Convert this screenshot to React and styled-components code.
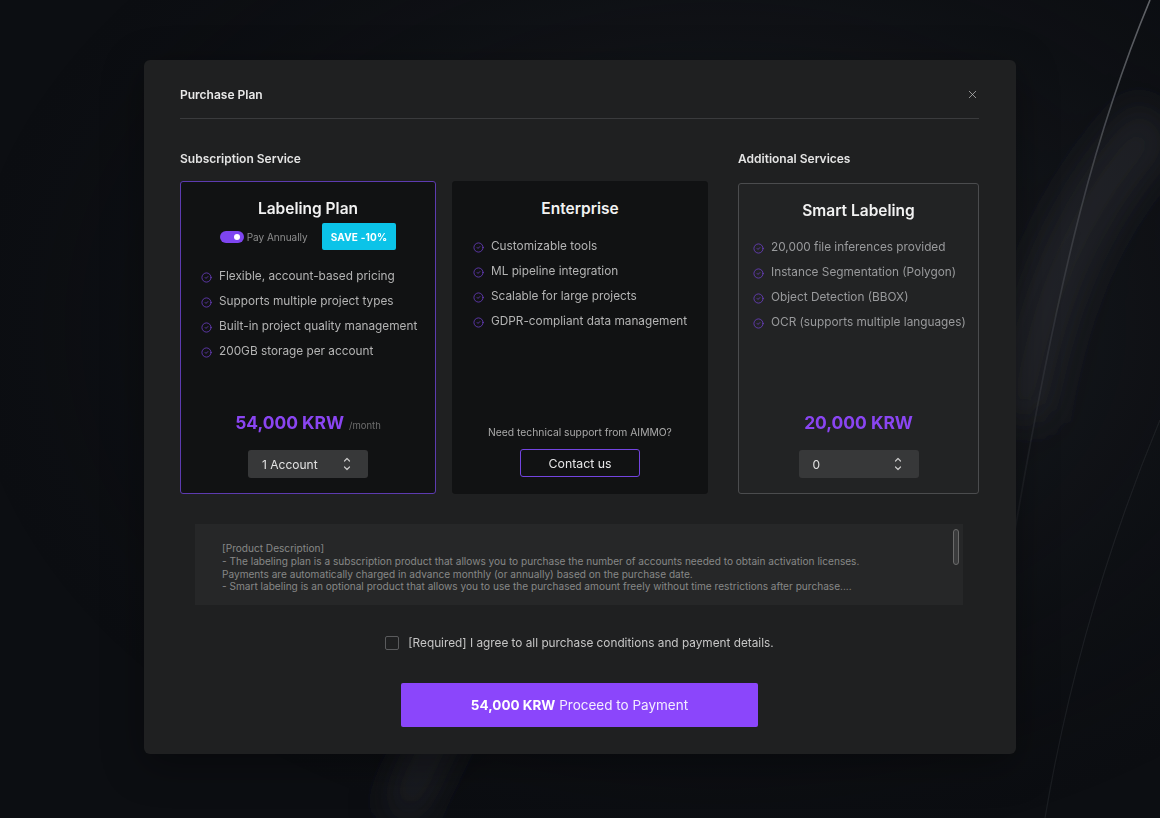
import React, { useState } from "react";
import styled, { createGlobalStyle } from "styled-components";
import { CircleCheck, X } from "lucide-react";

const GlobalStyle = createGlobalStyle`
  * { box-sizing: border-box; }
  html, body {
    margin: 0;
    padding: 0;
    background: #0c0e12;
    font-family: Inter, "Noto Sans", sans-serif;
    -webkit-font-smoothing: antialiased;
  }
`;

const labelingFeatures = [
  "Flexible, account-based pricing",
  "Supports multiple project types",
  "Built-in project quality management",
  "200GB storage per account",
];

const enterpriseFeatures = [
  "Customizable tools",
  "ML pipeline integration",
  "Scalable for large projects",
  "GDPR-compliant data management",
];

const smartFeatures = [
  "20,000 file inferences provided",
  "Instance Segmentation (Polygon)",
  "Object Detection (BBOX)",
  "OCR (supports multiple languages)",
];

function Backdrop() {
  return (
    <BackdropSvg viewBox="0 0 1160 818" preserveAspectRatio="none">
      <defs>
        <radialGradient id="haze" cx="0.62" cy="0.4" r="0.65">
          <stop offset="0" stopColor="#30343a" stopOpacity="0.55" />
          <stop offset="1" stopColor="#0c0e12" stopOpacity="0" />
        </radialGradient>
        <linearGradient id="streak" x1="0" y1="0" x2="0" y2="1">
          <stop offset="0" stopColor="#c9ccd2" stopOpacity="0.45" />
          <stop offset="0.6" stopColor="#8a8f98" stopOpacity="0.2" />
          <stop offset="1" stopColor="#8a8f98" stopOpacity="0.05" />
        </linearGradient>
        <filter id="soft" x="-50%" y="-50%" width="200%" height="200%">
          <feGaussianBlur stdDeviation="18" />
        </filter>
      </defs>
      <rect width="1160" height="818" fill="url(#haze)" />
      <path d="M1150 0 C 1100 120, 1060 260, 1010 560" stroke="url(#streak)" strokeWidth="1.6" fill="none" />
      <path d="M1160 420 C 1110 540, 1070 670, 1045 818" stroke="#5d626b" strokeOpacity="0.18" strokeWidth="1.2" fill="none" />
      <path d="M400 818 C 440 720, 490 640, 540 560" stroke="#3a3e45" strokeOpacity="0.35" strokeWidth="40" fill="none" filter="url(#soft)" />
      <path d="M1160 120 C 1080 200, 1040 300, 1020 420" stroke="#3a3e45" strokeOpacity="0.35" strokeWidth="60" fill="none" filter="url(#soft)" />
    </BackdropSvg>
  );
}

function Stepper({ value }) {
  return (
    <StepperBox>
      <span>{value}</span>
      <svg width="8" height="14" viewBox="0 0 8 14" fill="none" stroke="#c8c8c8" strokeWidth="1.2" strokeLinecap="round" strokeLinejoin="round">
        <path d="M1.5 4 L4 1.5 L6.5 4" />
        <path d="M1.5 10 L4 12.5 L6.5 10" />
      </svg>
    </StepperBox>
  );
}

function FeatureList({ items, dim, indent, top }) {
  return (
    <Features $indent={indent} $top={top}>
      {items.map((item) => (
        <Feature key={item} $dim={dim}>
          <CircleCheck size={11} strokeWidth={1.6} color="#7443d6" />
          <span>{item}</span>
        </Feature>
      ))}
    </Features>
  );
}

export default function App() {
  const [annual, setAnnual] = useState(true);
  const [agreed, setAgreed] = useState(false);

  return (
    <>
      <GlobalStyle />
      <Backdrop />
      <Page>
        <Modal>
          <Header>
            <Title>Purchase Plan</Title>
            <CloseButton aria-label="close">
              <X size={13} strokeWidth={1.3} color="#c4c4c4" />
            </CloseButton>
          </Header>

          <Sections>
            <Section>
              <SectionTitle>Subscription Service</SectionTitle>
              <CardRow>
                <Card $variant="selected">
                  <CardTitle>Labeling Plan</CardTitle>
                  <ToggleRow>
                    <Toggle $on={annual} onClick={() => setAnnual(!annual)} />
                    <ToggleLabel>Pay Annually</ToggleLabel>
                    <SaveBadge>SAVE -10%</SaveBadge>
                  </ToggleRow>
                  <FeatureList items={labelingFeatures} indent={20} top={18} />
                  <Bottom>
                    <Price>
                      54,000 KRW <small>/month</small>
                    </Price>
                    <Stepper value="1 Account" />
                  </Bottom>
                </Card>
                <Card>
                  <CardTitle>Enterprise</CardTitle>
                  <FeatureList items={enterpriseFeatures} indent={20} top={20} />
                  <Bottom>
                    <SupportText>Need technical support from AIMMO?</SupportText>
                    <ContactButton>Contact us</ContactButton>
                  </Bottom>
                </Card>
              </CardRow>
            </Section>

            <Section $narrow>
              <SectionTitle>Additional Services</SectionTitle>
              <Card $variant="outline">
                <CardTitle>Smart Labeling</CardTitle>
                <FeatureList items={smartFeatures} indent={14} top={19} dim />
                <Bottom>
                  <Price>20,000 KRW</Price>
                  <Stepper value="0" />
                </Bottom>
              </Card>
            </Section>
          </Sections>

          <Description>
            <DescText>
              [Product Description]
              <br />- The labeling plan is a subscription product that allows you to purchase the number of accounts needed to obtain activation licenses.
              <br />Payments are automatically charged in advance monthly (or annually) based on the purchase date.
              <br />- Smart labeling is an optional product that allows you to use the purchased amount freely without time restrictions after purchase....
            </DescText>
            <ScrollThumb />
          </Description>

          <AgreeRow onClick={() => setAgreed(!agreed)}>
            <CheckBox $checked={agreed} />
            <span>[Required] I agree to all purchase conditions and payment details.</span>
          </AgreeRow>

          <PayButton>
            <strong>54,000 KRW</strong> Proceed to Payment
          </PayButton>
        </Modal>
      </Page>
    </>
  );
}

const BackdropSvg = styled.svg`
  position: fixed;
  inset: 0;
  width: 100%;
  height: 100%;
  z-index: 0;
`;

const Page = styled.div`
  position: relative;
  z-index: 1;
  min-height: 818px;
  display: flex;
  justify-content: center;
  padding-top: 60px;
`;

const Modal = styled.div`
  width: 872px;
  height: 694px;
  background: #1f2021;
  border-radius: 6px;
  padding: 0 37px 27px 36px;
  display: flex;
  flex-direction: column;
  box-shadow: 0 10px 40px rgba(0, 0, 0, 0.35);
`;

const Header = styled.div`
  display: flex;
  align-items: center;
  justify-content: space-between;
  height: 59px;
  padding-top: 11px;
  border-bottom: 1px solid #3a3b3d;
`;

const Title = styled.h2`
  margin: 0;
  font-size: 12px;
  font-weight: 600;
  color: #e9e9e9;
`;

const CloseButton = styled.button`
  display: flex;
  background: none;
  border: none;
  padding: 0;
  cursor: pointer;
`;

const Sections = styled.div`
  display: flex;
  gap: 30px;
  margin-top: 32px;
`;

const Section = styled.div`
  display: flex;
  flex-direction: column;
  width: ${(p) => (p.$narrow ? "241px" : "528px")};
`;

const SectionTitle = styled.h3`
  margin: 0 0 15px;
  font-size: 12px;
  font-weight: 600;
  color: #e4e4e4;
  line-height: 15px;
`;

const CardRow = styled.div`
  display: flex;
  gap: 16px;
`;

const Card = styled.div`
  flex: 1;
  height: ${(p) => (p.$variant === "outline" ? "311px" : "313px")};
  margin-top: ${(p) => (p.$variant === "outline" ? "2px" : "0")};
  display: flex;
  flex-direction: column;
  border-radius: 3px;
  padding: 18px 0 15px;
  background: ${(p) => (p.$variant === "outline" ? "#222324" : "#111213")};
  border: 1px solid
    ${(p) =>
      p.$variant === "selected"
        ? "#5d3bb0"
        : p.$variant === "outline"
        ? "#4b4c4e"
        : "#111213"};
`;

const CardTitle = styled.div`
  text-align: center;
  font-size: 15.5px;
  font-weight: 600;
  color: #f2f2f2;
  line-height: 18px;
`;

const ToggleRow = styled.div`
  display: flex;
  align-items: center;
  justify-content: center;
  margin-top: 5px;
  height: 27px;
`;

const Toggle = styled.div`
  position: relative;
  width: 24px;
  height: 12px;
  border-radius: 6px;
  background: ${(p) => (p.$on ? "#7e45f0" : "#555")};
  cursor: pointer;
  &::after {
    content: "";
    position: absolute;
    top: 3px;
    left: ${(p) => (p.$on ? "14px" : "3px")};
    width: 6px;
    height: 6px;
    border-radius: 50%;
    background: #fff;
  }
`;

const ToggleLabel = styled.span`
  margin-left: 3px;
  font-size: 10px;
  color: #8d8d8d;
`;

const SaveBadge = styled.span`
  margin-left: 14px;
  height: 27px;
  padding: 0 9px;
  display: flex;
  align-items: center;
  border-radius: 2px;
  background: #0bc3e8;
  color: #fff;
  font-size: 10px;
  font-weight: 700;
  letter-spacing: 0.2px;
`;

const Features = styled.ul`
  list-style: none;
  margin: ${(p) => p.$top}px 0 0;
  padding: 0 0 0 ${(p) => p.$indent}px;
  display: flex;
  flex-direction: column;
  gap: 8px;
`;

const Feature = styled.li`
  display: flex;
  align-items: center;
  gap: 7px;
  font-size: 11.8px;
  line-height: 17px;
  color: ${(p) => (p.$dim ? "#999a9c" : "#b4b4b4")};
  svg {
    flex-shrink: 0;
    margin-top: 2px;
  }
`;

const Bottom = styled.div`
  margin-top: auto;
  display: flex;
  flex-direction: column;
  align-items: center;
`;

const Price = styled.div`
  display: flex;
  align-items: baseline;
  gap: 5px;
  height: 22px;
  font-size: 17.4px;
  font-weight: 700;
  color: #8a45f2;
  line-height: 22px;
  margin-bottom: 16px;
  small {
    font-size: 9.5px;
    font-weight: 400;
    line-height: 1;
    color: #6e6e6e;
  }
`;

const StepperBox = styled.div`
  width: 120px;
  height: 28px;
  border-radius: 3px;
  background: #373839;
  display: flex;
  align-items: center;
  justify-content: space-between;
  padding: 0 17px 0 14px;
  font-size: 12px;
  color: #e2e2e2;
`;

const SupportText = styled.div`
  font-size: 10.3px;
  color: #a9a9a9;
  margin-bottom: 11px;
`;

const ContactButton = styled.button`
  width: 120px;
  height: 28px;
  margin-bottom: 1px;
  border-radius: 3px;
  border: 1px solid #7344e0;
  background: transparent;
  color: #e6e6e6;
  font-family: inherit;
  font-size: 12.3px;
  cursor: pointer;
`;

const Description = styled.div`
  position: relative;
  margin: 30px 16px 0 15px;
  height: 81px;
  background: #262728;
  padding: 18px 0 0 27px;
`;

const DescText = styled.p`
  margin: 0;
  font-size: 10.1px;
  line-height: 12.8px;
  color: #878787;
`;

const ScrollThumb = styled.div`
  position: absolute;
  top: 5px;
  right: 4px;
  width: 6px;
  height: 36px;
  border-radius: 3px;
  border: 1px solid #6a6a6a;
  background: #3a3b3c;
`;

const AgreeRow = styled.label`
  display: flex;
  align-items: center;
  justify-content: center;
  gap: 9px;
  margin-top: 31px;
  font-size: 11.8px;
  color: #c6c6c6;
  cursor: pointer;
`;

const CheckBox = styled.span`
  width: 14px;
  height: 14px;
  border-radius: 2px;
  border: 1px solid #5a5b5d;
  background: ${(p) => (p.$checked ? "#8a45f2" : "transparent")};
`;

const PayButton = styled.button`
  align-self: center;
  margin-top: 33px;
  width: 357px;
  height: 44px;
  border: none;
  border-radius: 2px;
  background: #8b46fb;
  color: #f3edff;
  font-family: inherit;
  font-size: 13.5px;
  cursor: pointer;
  strong {
    font-weight: 700;
    color: #fff;
  }
`;
